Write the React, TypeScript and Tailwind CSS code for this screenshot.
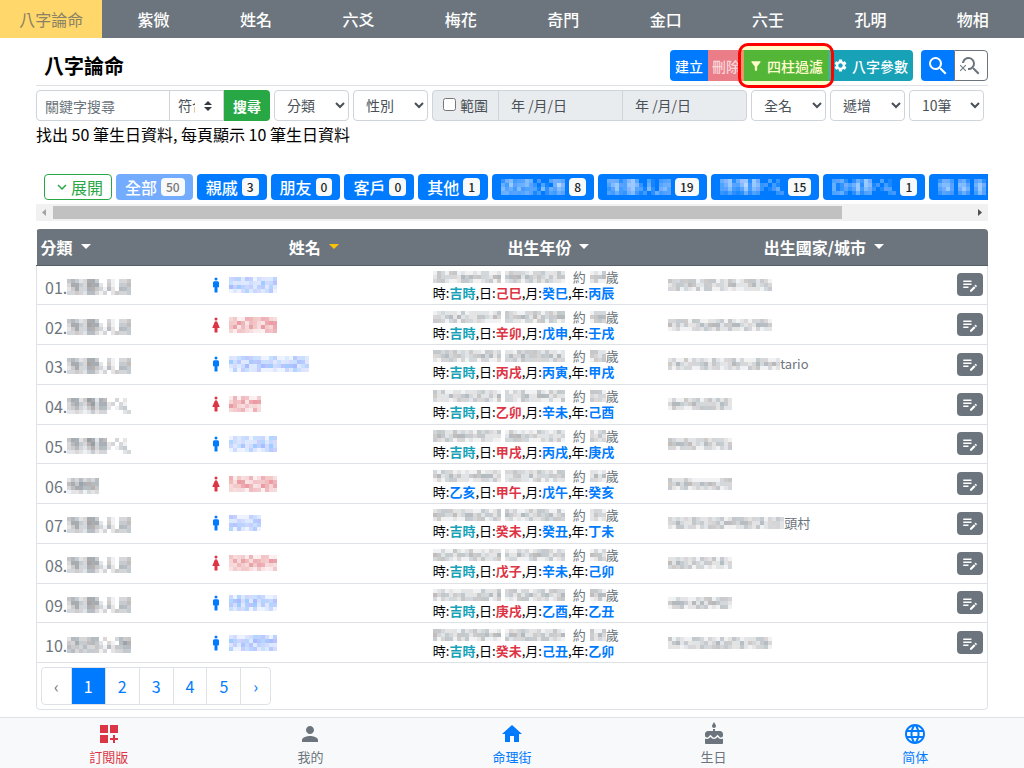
import { useState } from "react";
import type { ReactNode } from "react";
import {
  MdCake,
  MdDashboardCustomize,
  MdEditNote,
  MdExpandMore,
  MdFilterAlt,
  MdHome,
  MdLanguage,
  MdMan,
  MdPerson,
  MdSearch,
  MdSearchOff,
  MdSettings,
  MdWoman,
} from "react-icons/md";

const NAV = ["八字論命", "紫微", "姓名", "六爻", "梅花", "奇門", "金口", "六壬", "孔明", "物相"];

// brightness levels of the masked labels, one digit per 4px cell
const ACTOR = ["4542366400310334", "3664376620410445", "2463366431520554", "3343255313024334"];
const HK = ["4662476265003020", "3564367366230310", "3453246355201340", "2232124233000023"];
const POLITICS = ["2553345503003544", "4364455420310576", "5443533431524455", "4534344413023344"];
const JAPAN = ["3442024365003010", "4125356266130310", "4124246355201430", "3442024234000023"];
const FRIEND = ["24353435", "56476655", "35665564", "12231323"];
const BUSINESS = ["254304420442", "465406540565", "356405650464", "243303430354"];

// same seed, same pattern, so a masked value never flickers between renders
function noise(cols: number, rows: number, seed: number, gap = -1) {
  return Array.from({ length: rows }, (_, y) =>
    Array.from({ length: cols }, (_, x) => {
      if (x === gap) return "0";
      const n = Math.abs(Math.sin(x * 12.9 + y * 78.2 + seed * 37.7) * 43758.5) % 1;
      const edge = y === 0 || y === rows - 1 ? 1 : 2;
      return String(Math.floor(n * 4) + edge);
    }).join("")
  );
}

const TINTS = {
  gray: ["#6c757d", "#6c7f88", "#857c78", "#6c757d", "#727a8c"],
  blue: ["#4d7dff", "#5f8cff", "#3d9bff", "#7a84ff"],
  red: ["#dc3545", "#d9536a", "#e0786a", "#cf4a55"],
  white: ["#ffffff", "#d8e8ff", "#ffffff", "#e4dcff"],
};

function Mosaic({ cells, tone }: { cells: string[]; tone: keyof typeof TINTS }) {
  const w = cells[0].length * 4;
  const h = cells.length * 4;
  const tints = TINTS[tone];
  return (
    <svg width={w} height={h} viewBox={`0 0 ${w} ${h}`} shapeRendering="crispEdges" className="shrink-0" aria-hidden="true">
      {cells.map((row, y) =>
        row.split("").map((level, x) => (
          <rect
            key={`${x}-${y}`}
            x={x * 4}
            y={y * 4}
            width={4}
            height={4}
            fill={tints[(x * 3 + y * 2) % tints.length]}
            fillOpacity={Number(level) / 10}
          />
        ))
      )}
    </svg>
  );
}

type Tag = { label?: string; mask?: string[]; count?: number };

const TAGS: Tag[] = [
  { label: "全部", count: 50 },
  { label: "親戚", count: 3 },
  { label: "朋友", count: 0 },
  { label: "客戶", count: 0 },
  { label: "其他", count: 1 },
  { mask: POLITICS, count: 8 },
  { mask: ACTOR, count: 19 },
  { mask: HK, count: 15 },
  { mask: JAPAN, count: 1 },
  { mask: BUSINESS },
];

type Person = {
  category: string[];
  male: boolean;
  nameCols: number;
  pillars: [string, string, string, string];
  placeCols: number;
  place?: string;
};

const PEOPLE: Person[] = [
  { category: ACTOR, male: true, nameCols: 12, pillars: ["吉時", "己巳", "癸巳", "丙辰"], placeCols: 26 },
  { category: ACTOR, male: false, nameCols: 12, pillars: ["吉時", "辛卯", "戊申", "壬戌"], placeCols: 26 },
  { category: ACTOR, male: true, nameCols: 20, pillars: ["吉時", "丙戌", "丙寅", "甲戌"], placeCols: 28, place: "tario" },
  { category: HK, male: false, nameCols: 8, pillars: ["吉時", "乙卯", "辛未", "己酉"], placeCols: 16 },
  { category: HK, male: true, nameCols: 12, pillars: ["吉時", "甲戌", "丙戌", "庚戌"], placeCols: 16 },
  { category: FRIEND, male: false, nameCols: 12, pillars: ["乙亥", "甲午", "戊午", "癸亥"], placeCols: 16 },
  { category: ACTOR, male: true, nameCols: 8, pillars: ["吉時", "癸未", "癸丑", "丁未"], placeCols: 29, place: "頭村" },
  { category: ACTOR, male: false, nameCols: 12, pillars: ["吉時", "戊子", "辛未", "己卯"], placeCols: 16 },
  { category: ACTOR, male: true, nameCols: 12, pillars: ["吉時", "庚戌", "乙酉", "乙丑"], placeCols: 16 },
  { category: POLITICS, male: true, nameCols: 12, pillars: ["吉時", "癸未", "己丑", "乙卯"], placeCols: 26 },
];

function FilterSelect({ label, options }: { label: string; options: string[] }) {
  return (
    <select
      aria-label={label}
      className="h-[31px] w-[75px] rounded border border-[#ced4da] bg-white pb-0.5 pl-2 text-sm text-[#495057]"
    >
      {options.map((o) => (
        <option key={o}>{o}</option>
      ))}
    </select>
  );
}

function SortHeader({ children, active }: { children: ReactNode; active?: boolean }) {
  return (
    <button type="button" className="inline-flex items-center gap-2 font-bold">
      {children}
      <svg width="10" height="5" viewBox="0 0 10 5" className={active ? "text-[#ffc107]" : "text-white"}>
        <path d="M0 0h10L5 5z" fill="currentColor" />
      </svg>
    </button>
  );
}

function PersonRow({ person, index }: { person: Person; index: number }) {
  const [hour, day, month, year] = person.pillars;
  const no = String(index + 1).padStart(2, "0");
  return (
    <tr className="border-b border-[#dee2e6]">
      <td className="pl-2 pt-1">
        <div className="flex items-center text-base text-[#6c757d]">
          {no}.
          <Mosaic cells={person.category} tone="gray" />
        </div>
      </td>
      <td className="pl-1">
        <div className="flex items-center gap-1">
          {person.male ? (
            <MdMan size={18} className="text-[#007bff]" />
          ) : (
            <MdWoman size={18} className="text-[#dc3545]" />
          )}
          <Mosaic cells={noise(person.nameCols, 4, index + 3)} tone={person.male ? "blue" : "red"} />
        </div>
      </td>
      <td className="pl-1 text-[13px] leading-4">
        <div className="flex items-center text-[#6c757d]">
          <Mosaic cells={noise(33, 3, index + 20, 17)} tone="gray" />
          <span className="ml-2 mr-1">約</span>
          <Mosaic cells={noise(4, 3, index + 40)} tone="gray" />
          歲
        </div>
        <div className="whitespace-nowrap text-black">
          時:
          <b className={hour === "吉時" ? "text-[#17a2b8]" : "text-[#007bff]"}>{hour}</b>
          ,日:<b className="text-[#dc3545]">{day}</b>
          ,月:<b className="text-[#007bff]">{month}</b>
          ,年:<b className="text-[#007bff]">{year}</b>
        </div>
      </td>
      <td className="pl-1 text-[13px] leading-4 text-[#6c757d]">
        <div className="flex items-center">
          <Mosaic cells={noise(person.placeCols, 3, index + 60)} tone="gray" />
          {person.place}
        </div>
      </td>
      <td className="pr-1">
        <button
          type="button"
          aria-label={`編輯 ${no}`}
          className="ml-auto flex h-[23px] w-[26px] items-center justify-center rounded bg-[#6c757d] text-white"
        >
          <MdEditNote size={18} />
        </button>
      </td>
    </tr>
  );
}

function TabLink({ icon, label, color }: { icon: ReactNode; label: string; color: string }) {
  return (
    <a href="#" className={`flex flex-1 flex-col items-center pt-1 text-[13px] leading-[22px] ${color}`}>
      {icon}
      {label}
    </a>
  );
}

export default function App() {
  const [keyword, setKeyword] = useState("");
  const [useRange, setUseRange] = useState(false);
  const [page, setPage] = useState(1);

  return (
    <div className="min-h-screen bg-white pb-[58px] font-['Noto_Sans_CJK_TC',sans-serif] text-base text-black">
      <nav className="flex h-[38px] bg-[#6c757d]">
        {NAV.map((item, i) => (
          <a
            key={item}
            href="#"
            className={
              i === 0
                ? "flex flex-1 items-center justify-center bg-[#ffd76a] text-[#8a8265]"
                : "flex flex-1 items-center justify-center font-medium text-white"
            }
          >
            {item}
          </a>
        ))}
      </nav>

      <main className="px-9">
        <header className="flex items-center border-b border-[#dee2e6] pt-3 pb-1">
          <h1 className="flex-1 pl-2 text-xl font-bold leading-[31px]">八字論命</h1>
          <div className="flex h-[31px] text-sm font-medium text-white">
            <button type="button" className="rounded-l bg-[#007bff] px-[5px]">建立</button>
            <button type="button" disabled className="bg-[#ea7d88] px-1 text-white/70">刪除</button>
            <div className="relative flex">
              <button type="button" className="flex items-center gap-1 bg-[#28a745] px-[5px]">
                <MdFilterAlt size={14} />
                四柱過濾
              </button>
              <div className="pointer-events-none absolute -inset-x-[6px] -inset-y-[7px] z-10 rounded-[10px] border-[3px] border-[#ff0000] bg-[#fff200]/20" />
            </div>
            <button type="button" className="flex items-center gap-1 rounded-r bg-[#17a2b8] px-[5px]">
              <MdSettings size={15} />
              八字參數
            </button>
          </div>
          <div className="ml-2 flex h-[31px]">
            <button type="button" aria-label="搜尋" className="flex w-[33px] items-center justify-center rounded-l bg-[#007bff] text-white">
              <MdSearch size={24} />
            </button>
            <button type="button" aria-label="清除搜尋" className="flex w-[34px] items-center justify-center rounded-r border border-[#6c757d] text-[#6c757d]">
              <MdSearchOff size={24} />
            </button>
          </div>
        </header>

        <form className="mt-1 flex gap-1 text-sm text-[#495057]" onSubmit={(e) => e.preventDefault()}>
          <div className="flex h-[31px]">
            <input
              aria-label="關鍵字搜尋"
              placeholder="關鍵字搜尋"
              value={keyword}
              onChange={(e) => setKeyword(e.target.value)}
              className="w-[134px] rounded-l border border-[#ced4da] px-2 placeholder:text-[#6c757d]"
            />
            <div className="relative -ml-px">
              <select aria-label="比對方式" className="h-full w-[55px] appearance-none border border-[#ced4da] bg-white pb-0.5 pl-2 pr-7">
                <option>符合</option>
                <option>開頭</option>
              </select>
              <svg width="8" height="10" viewBox="0 0 8 10" className="pointer-events-none absolute top-[11px] right-3 text-[#343a40]">
                <path d="M4 0 0 4h8zM0 6l4 4 4-4z" fill="currentColor" />
              </svg>
            </div>
            <button type="submit" className="rounded-r bg-[#28a745] px-[9px] font-bold text-white">
              搜尋
            </button>
          </div>
          <FilterSelect label="分類" options={["分類", "親戚", "朋友"]} />
          <FilterSelect label="性別" options={["性別", "男", "女"]} />
          <div className="flex h-[31px] min-w-0 flex-1">
            <label className="flex w-[67px] items-center justify-center gap-1 rounded-l border border-[#ced4da] bg-[#e9ecef] pb-0.5">
              <input type="checkbox" checked={useRange} onChange={(e) => setUseRange(e.target.checked)} className="size-[13px]" />
              範圍
            </label>
            <input
              aria-label="開始日期"
              defaultValue="年 /月/日"
              disabled={!useRange}
              className="-ml-px w-0 min-w-0 flex-1 border border-[#ced4da] bg-[#e9ecef] pb-0.5 pl-3"
            />
            <input
              aria-label="結束日期"
              defaultValue="年 /月/日"
              disabled={!useRange}
              className="-ml-px w-0 min-w-0 flex-1 rounded-r border border-[#ced4da] bg-[#e9ecef] pb-0.5 pl-3"
            />
          </div>
          <FilterSelect label="姓名顯示" options={["全名", "姓氏"]} />
          <FilterSelect label="排序" options={["遞增", "遞減"]} />
          <div className="pr-1">
            <FilterSelect label="每頁筆數" options={["10筆", "20筆", "50筆"]} />
          </div>
        </form>

        <p className="mt-px leading-6">找出 50 筆生日資料, 每頁顯示 10 筆生日資料</p>

        <div className="mt-7 flex gap-1 overflow-hidden pl-2">
          <button type="button" className="flex h-[26px] shrink-0 items-center rounded border border-[#28a745] px-2 text-[#28a745]">
            <MdExpandMore size={18} />
            展開
          </button>
          {TAGS.map((tag, i) => (
            <button
              key={i}
              type="button"
              disabled={i === 0}
              className="flex h-[26px] shrink-0 items-center gap-1 rounded bg-[#007bff] pr-2 pl-[9px] font-medium text-white disabled:bg-[#73abff]"
            >
              {tag.label}
              {tag.mask && <Mosaic cells={tag.mask} tone="white" />}
              {tag.count !== undefined && (
                <span className={`rounded bg-[#f8f9fa] px-[5px] text-xs leading-[18px] ${i === 0 ? "text-[#777]" : "text-[#212529]"}`}>
                  {tag.count}
                </span>
              )}
            </button>
          ))}
        </div>

        <div className="mt-1 flex h-[17px] items-center bg-[#f1f1f1]">
          <svg width="17" height="17" viewBox="0 0 17 17">
            <path d="M10 5v7L6 8.500z" fill="#a3a3a3" />
          </svg>
          <div className="flex-1">
            <div className="h-[13px] w-[86%] bg-[#c1c1c1]" />
          </div>
          <svg width="17" height="17" viewBox="0 0 17 17">
            <path d="M7 5v7l4-3.500z" fill="#505050" />
          </svg>
        </div>

        <section className="mt-2 overflow-hidden rounded">
          <table className="h-[434px] w-full table-fixed border-collapse">
            <colgroup>
              <col className="w-[17.5%]" />
              <col className="w-[23.75%]" />
              <col className="w-[24.75%]" />
              <col />
              <col className="w-10" />
            </colgroup>
            <thead className="bg-[#6c757d] text-white">
              <tr className="h-9 border-b border-[#565e66]">
                <th className="pl-1 text-left"><SortHeader>分類</SortHeader></th>
                <th className="pr-1"><SortHeader active>姓名</SortHeader></th>
                <th className="pl-1"><SortHeader>出生年份</SortHeader></th>
                <th colSpan={2} className="pr-1"><SortHeader>出生國家/城市</SortHeader></th>
              </tr>
            </thead>
            <tbody className="border-x border-[#dee2e6]">
              {PEOPLE.map((person, i) => (
                <PersonRow key={i} person={person} index={i} />
              ))}
            </tbody>
          </table>
          <div className="flex rounded-b border-x border-b border-[#dee2e6] p-1 text-[#007bff]">
            <div className="flex h-[38px] divide-x divide-[#dee2e6] overflow-hidden rounded border border-[#dee2e6]">
              <button type="button" aria-label="上一頁" disabled className="px-3 text-[#6c757d]">‹</button>
              {[1, 2, 3, 4, 5].map((n) => (
                <button
                  key={n}
                  type="button"
                  onClick={() => setPage(n)}
                  className={n === page ? "bg-[#007bff] px-3 text-white" : "px-3"}
                >
                  {n}
                </button>
              ))}
              <button type="button" aria-label="下一頁" className="px-3">›</button>
            </div>
          </div>
        </section>
      </main>

      <footer className="fixed inset-x-0 bottom-0 flex h-[51px] border-t border-[#dee2e6] bg-[#f8f9fa] px-2">
        <TabLink icon={<MdDashboardCustomize size={24} className="shrink-0" />} label="訂閱版" color="text-[#dc3545]" />
        <TabLink icon={<MdPerson size={24} className="shrink-0" />} label="我的" color="text-[#6c757d]" />
        <TabLink icon={<MdHome size={24} className="shrink-0" />} label="命理街" color="text-[#007bff]" />
        <TabLink icon={<MdCake size={24} className="shrink-0" />} label="生日" color="text-[#6c757d]" />
        <TabLink icon={<MdLanguage size={24} className="shrink-0" />} label="简体" color="text-[#007bff]" />
      </footer>
    </div>
  );
}
